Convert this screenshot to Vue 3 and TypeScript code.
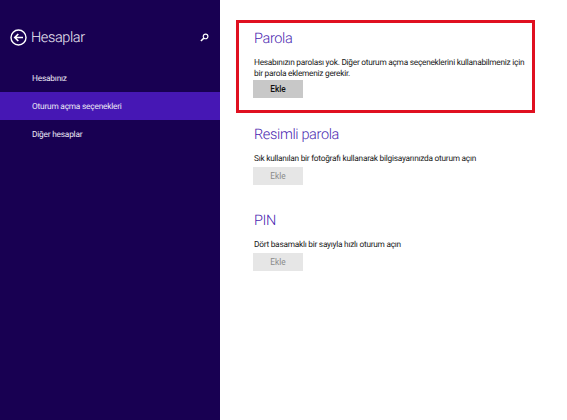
<script setup lang="ts">
interface Section { title: string; text: string[]; enabled: boolean; marked: boolean }
const nav = [
  { label: 'Hesabınız', active: false },
  { label: 'Oturum açma seçenekleri', active: true },
  { label: 'Diğer hesaplar', active: false },
]
const sections: Section[] = [
  { title: 'Parola', text: ['Hesabınızın parolası yok. Diğer oturum açma seçeneklerini kullanabilmeniz için', 'bir parola eklemeniz gerekir.'], enabled: true, marked: true },
  { title: 'Resimli parola', text: ['Sık kullanılan bir fotoğrafı kullanarak bilgisayarınızda oturum açın'], enabled: false, marked: false },
  { title: 'PIN', text: ['Dört basamaklı bir sayıyla hızlı oturum açın'], enabled: false, marked: false },
]
</script>

<template>
  <div class="page">
    <aside class="side">
      <header class="head">
        <svg class="back" viewBox="0 0 17 17" aria-hidden="true">
          <circle cx="8.5" cy="8.5" r="7.5" fill="none" stroke="#fff" stroke-width="1.4" />
          <path d="M13 8.5H5M8.3 5L4.8 8.5L8.3 12" fill="none" stroke="#fff" stroke-width="1.7" />
        </svg>
        <h1 class="head-title">Hesaplar</h1>
        <svg class="search" viewBox="0 0 10 10" aria-hidden="true">
          <circle cx="6.2" cy="3.8" r="2.6" fill="none" stroke="#fff" stroke-width="1.3" />
          <path d="M4.3 5.7L1 9" fill="none" stroke="#fff" stroke-width="1.6" />
        </svg>
      </header>
      <nav class="nav">
        <div v-for="item in nav" :key="item.label" class="nav-item" :class="{ active: item.active }">{{ item.label }}</div>
      </nav>
    </aside>
    <main class="main">
      <section v-for="s in sections" :key="s.title" class="sec" :class="{ marked: s.marked }">
        <h2 class="sec-title">{{ s.title }}</h2>
        <p class="sec-text"><span v-for="line in s.text" :key="line" class="line">{{ line }}</span></p>
        <button class="btn" :class="{ off: !s.enabled }" type="button">Ekle</button>
      </section>
    </main>
  </div>
</template>

<style>
html, body { margin: 0; background: #fff; }
</style>

<style scoped>
.page {
  display: flex;
  width: 567px;
  height: 420px;
  overflow: hidden;
  font-family: Roboto, "Noto Sans", sans-serif;
  text-rendering: geometricPrecision;
  background: #fff;
}
.side {
  flex: 0 0 220px;
  background: #180052;
  color: #fff;
}
.head {
  display: flex;
  align-items: center;
  height: 22px;
  margin-top: 26px;
  padding: 0 11px 0 10px;
}
.back { width: 17px; height: 17px; flex: none; }
.head-title {
  flex: 1;
  margin: 0 0 0 4px;
  font-size: 14.5px;
  font-weight: 300;
  letter-spacing: -0.4px;
  color: #f0edf7;
}
.search { width: 9px; height: 9px; flex: none; }
.nav { margin-top: 16px; }
.nav-item {
  display: flex;
  align-items: center;
  box-sizing: border-box;
  height: 28px;
  padding: 1px 0 0 32px;
  font-size: 8.3px;
  letter-spacing: -0.2px;
  color: #ebe7f5;
}
.nav-item.active { background: #4617b4; }
.main { flex: 1; padding: 20px 0 0 16px; }
.sec {
  width: 299px;
  height: 86px;
  box-sizing: border-box;
  padding: 6px 0 0 18px;
}
.sec.marked {
  height: 93px;
  border: 3px solid #e01020;
  padding: 6px 0 0 15px;
  margin-bottom: 6px;
}
.sec-title {
  margin: 0;
  font-size: 14.5px;
  font-weight: 300;
  letter-spacing: -0.35px;
  line-height: 20px;
  color: #4a1fb0;
}
.sec-text {
  margin: 9px 0 0;
  font-size: 8.3px;
  letter-spacing: -0.25px;
  line-height: 11px;
  color: #1a1a1a;
}
.line { display: block; white-space: nowrap; }
.btn {
  display: block;
  width: 50px;
  height: 18px;
  margin: 2px 0 0 -1px;
  padding: 0;
  border: 0;
  background: #c8c8c8;
  font: 500 8.3px Roboto, "Noto Sans", sans-serif;
  color: #111;
}
.marked .btn { margin-top: 0; }
.btn.off { background: #e6e6e6; color: #8a8a8a; font-weight: 400; }
</style>
